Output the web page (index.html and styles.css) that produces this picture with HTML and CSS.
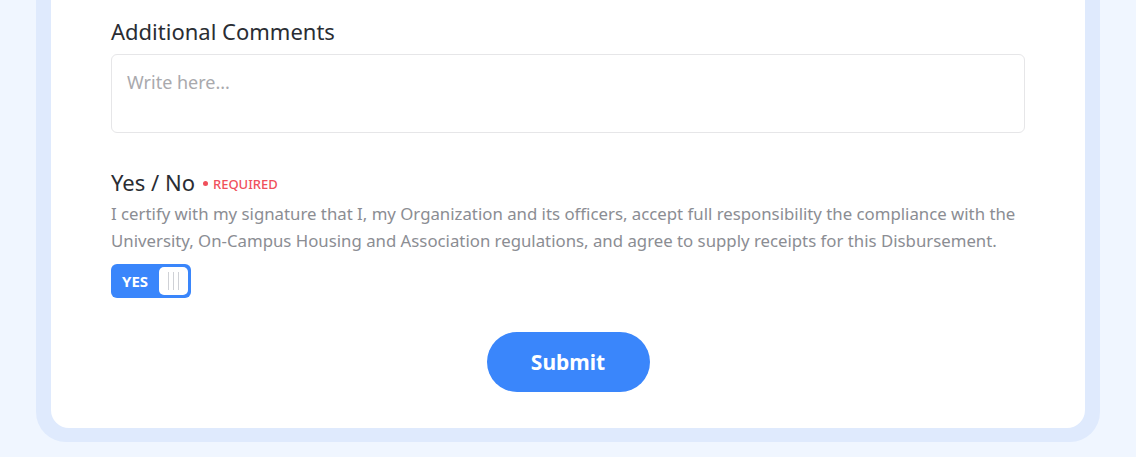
FILE: index.html
```html
<!DOCTYPE html>
<html>
<head>
<meta charset="utf-8">
<link rel="stylesheet" href="styles.css">
</head>
<body>
<div class="page">
  <div class="frame">
    <div class="card">
      <div class="field">
        <label class="label">Additional Comments</label>
        <div class="textarea">Write here...</div>
      </div>
      <div class="field field-yn">
        <div class="label-row">
          <span class="label">Yes / No</span>
          <span class="req"><span class="dot"></span>REQUIRED</span>
        </div>
        <p class="desc">I certify with my signature that I, my Organization and its officers, accept full responsibility the compliance with the University, On-Campus Housing and Association regulations, and agree to supply receipts for this Disbursement.</p>
        <div class="toggle">
          <span class="toggle-text">YES</span>
          <span class="knob"><i></i><i></i><i></i></span>
        </div>
      </div>
      <div class="actions">
        <button class="submit">Submit</button>
      </div>
    </div>
  </div>
</div>
</body>
</html>
```
FILE: styles.css
```css
html, body { margin: 0; padding: 0; }
body {
  background: #f0f6ff;
  font-family: "Noto Sans", "Open Sans", sans-serif;
  color: #2a2d33;
}
.page { padding: 0 36px 15px; }
.frame {
  background: #dfeafd;
  padding: 0 15px 14px;
  border-radius: 0 0 30px 30px;
}
.card {
  background: #fff;
  border-radius: 0 0 18px 18px;
  padding: 15px 60px 36px;
}
.label {
  display: block;
  font-size: 22px;
  line-height: 32px;
  color: #2a2d33;
}
.textarea {
  margin-top: 7px;
  border: 1px solid #e6e6e8;
  border-radius: 6px;
  padding: 15px 15px;
  box-sizing: border-box;
  height: 79px;
  font-size: 18px;
  line-height: 24px;
  color: #a9a9ad;
}
.field-yn { margin-top: 33px; }
.label-row { display: flex; align-items: center; gap: 8px; height: 32px; }
.label-row .label { display: inline; }
.req {
  display: inline-flex;
  align-items: center;
  gap: 5px;
  color: #f0505b;
  font-size: 13px;
  font-weight: 500;
  margin-top: 3px;
}
.dot { width: 5px; height: 5px; border-radius: 50%; background: #f0505b; }
.desc {
  margin: 2px 0 0;
  font-size: 16.8px;
  line-height: 27px;
  color: #8b8d93;
}
.toggle {
  margin-top: 10px;
  width: 80px;
  height: 34px;
  box-sizing: border-box;
  background: #3a86fb;
  border-radius: 6px;
  padding: 3px;
  display: flex;
  align-items: center;
  justify-content: space-between;
}
.toggle-text {
  color: #fff;
  font-weight: 700;
  font-size: 15px;
  padding-left: 8px;
}
.knob {
  width: 29px;
  height: 28px;
  background: #fff;
  border-radius: 5px;
  display: flex;
  justify-content: center;
  align-items: center;
  gap: 4px;
}
.knob i { width: 1px; height: 18px; background: #cfd1d6; display: block; }
.actions { display: flex; justify-content: center; margin-top: 34px; }
.submit {
  width: 163px;
  height: 60px;
  border: none;
  border-radius: 30px;
  background: #3a86fb;
  color: #fff;
  font-family: inherit;
  font-weight: 700;
  font-size: 21px;
}
```
